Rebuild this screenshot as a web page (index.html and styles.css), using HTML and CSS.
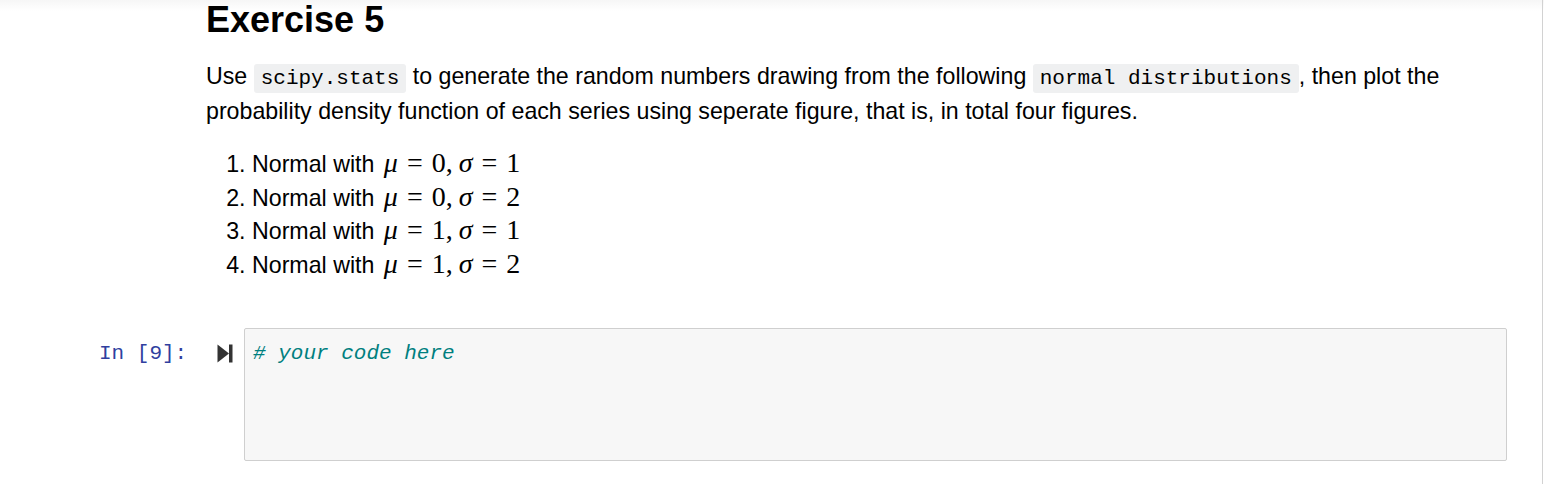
FILE: index.html
```html
<!DOCTYPE html>
<html lang="en">
<head>
<meta charset="utf-8">
<title>Exercise 5</title>
<link rel="stylesheet" href="styles.css">
</head>
<body>
<div class="page">
  <div class="notebook">
    <div class="cell text-cell">
      <div class="rendered">
        <h2 class="title">Exercise 5</h2>
        <p class="para">Use <code class="ic">scipy.stats</code> to generate the random numbers drawing from the following <code class="ic">normal distributions</code>, then plot the probability density function of each series using seperate figure, that is, in total four figures.</p>
        <ol class="list">
          <li>Normal with <span class="math"><i>μ</i><span class="rel">=</span>0<span class="punct">,</span><i>σ</i><span class="rel">=</span>1</span></li>
          <li>Normal with <span class="math"><i>μ</i><span class="rel">=</span>0<span class="punct">,</span><i>σ</i><span class="rel">=</span>2</span></li>
          <li>Normal with <span class="math"><i>μ</i><span class="rel">=</span>1<span class="punct">,</span><i>σ</i><span class="rel">=</span>1</span></li>
          <li>Normal with <span class="math"><i>μ</i><span class="rel">=</span>1<span class="punct">,</span><i>σ</i><span class="rel">=</span>2</span></li>
        </ol>
      </div>
    </div>
    <div class="cell code-cell">
      <div class="prompt">In [9]:</div>
      <div class="run">
        <svg width="16" height="19" viewBox="0 0 16 19" aria-hidden="true">
          <path d="M0.5 0.5 L12 9.5 L0.5 18.5 Z" fill="#333"/>
          <rect x="12" y="0.5" width="3.5" height="18" fill="#333"/>
        </svg>
      </div>
      <div class="input-area"><span class="cm-comment"># your code here</span></div>
    </div>
  </div>
</div>
</body>
</html>
```

FILE: styles.css
```css
html, body {
  margin: 0;
  padding: 0;
  background: #fff;
}

.page {
  width: 1544px;
  height: 484px;
  overflow: hidden;
  background: linear-gradient(to bottom, #f6f6f6 0px, #fbfbfb 6px, #ffffff 11px);
  font-family: "Liberation Sans", Arial, sans-serif;
  color: #000;
}

.notebook {
  width: 1542px;
  height: 484px;
  border-right: 1px solid #d2d2d2;
}

.text-cell {
  padding-left: 206px;
  padding-right: 60px;
}

.title {
  margin: 0;
  padding-top: 2px;
  font-size: 36px;
  line-height: 36px;
  font-weight: bold;
}

.para {
  margin: 22px 0 0 0;
  font-size: 23.2px;
  line-height: 33px;
}

.ic {
  font-family: "Liberation Mono", "DejaVu Sans Mono", monospace;
  font-size: 21px;
  background: #eff0f1;
  border-radius: 3px;
  padding: 3px 7px;
}

.list {
  margin: 20px 0 0 0;
  padding-left: 46px;
  font-size: 23.2px;
  line-height: 33.7px;
}

.list li {
  height: 33.7px;
}

.math {
  font-family: "Liberation Serif", "Times New Roman", serif;
  font-size: 28px;
  line-height: 0;
  margin-left: 3px;
}

.math i {
  font-style: italic;
}

.rel {
  margin: 0 9px;
}

.punct {
  margin-right: 6px;
}

.code-cell {
  display: flex;
  align-items: flex-start;
  margin-top: 45px;
}

.prompt {
  width: 99px;
  padding-left: 99px;
  padding-top: 13px;
  font-family: "Liberation Mono", "DejaVu Sans Mono", monospace;
  font-size: 21px;
  line-height: 26px;
  color: #303f9f;
}

.run {
  width: 46px;
  padding-top: 16px;
  padding-left: 19px;
  box-sizing: border-box;
  display: flex;
}

.input-area {
  width: 1263px;
  height: 133px;
  box-sizing: border-box;
  border: 1px solid #cfcfcf;
  border-radius: 2px;
  background: #f7f7f7;
  padding: 12px 8px;
  font-family: "Liberation Mono", "DejaVu Sans Mono", monospace;
  font-size: 21px;
  line-height: 26px;
}

.cm-comment {
  color: #007f7f;
  font-style: italic;
}
```
